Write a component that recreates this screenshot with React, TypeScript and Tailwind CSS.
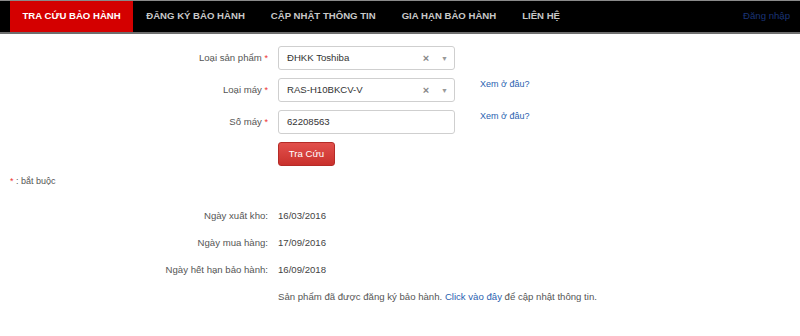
import React from 'react';

const NAV_ITEMS = ['TRA CỨU BẢO HÀNH', 'ĐĂNG KÝ BẢO HÀNH', 'CẬP NHẬT THÔNG TIN', 'GIA HẠN BẢO HÀNH', 'LIÊN HỆ'];

const INFO_ROWS = [
  { label: 'Ngày xuất kho:', value: '16/03/2016' },
  { label: 'Ngày mua hàng:', value: '17/09/2016' },
  { label: 'Ngày hết hạn bảo hành:', value: '16/09/2018' },
];

const SelectBox: React.FC<{ value: string }> = ({ value }) => (
  <div className="w-[177px] h-[24px] border border-[#cfcfcf] rounded-[3px] bg-white flex items-center pl-[8px] pr-[6px] text-[9.6px] text-[#333]">
    <span className="flex-1">{value}</span>
    <span className="text-[11px] text-[#888] font-bold mr-[12px] leading-none">×</span>
    <span className="text-[7px] text-[#999] leading-none">▼</span>
  </div>
);

const Label: React.FC<{ text: string }> = ({ text }) => (
  <div className="w-[268px] text-right text-[9.6px] text-[#555]">
    {text} <span className="text-[#e33] text-[9px]">*</span>
  </div>
);

export default function App() {
  return (
    <div className="w-[800px] h-[336px] bg-white overflow-hidden" style={{ fontFamily: '"Liberation Sans", Arial, sans-serif' }}>
      {/* nav */}
      <div className="h-[34px] bg-black border-t border-b-2 border-t-[#8a8a8a] border-b-[#6e6e6e] flex items-stretch">
        <div className="w-[10px]" />
        {NAV_ITEMS.map((item, i) => (
          <div
            key={item}
            className={`flex items-center text-[9.6px] font-bold ${
              i === 0 ? 'bg-[#d40000] text-white px-[12.5px]' : 'text-[#c8c8c8] px-[13px]'
            }`}
          >
            {item}
          </div>
        ))}
        <div className="flex-1" />
        <div className="flex items-center pr-[10px] text-[9.6px] text-[#1b3577]">Đăng nhập</div>
      </div>

      {/* form */}
      <div className="mt-[12px] flex flex-col gap-[8px]">
        <div className="flex items-center">
          <Label text="Loại sản phẩm" />
          <div className="ml-[10px]"><SelectBox value="ĐHKK Toshiba" /></div>
        </div>
        <div className="flex items-center">
          <Label text="Loại máy" />
          <div className="ml-[10px]"><SelectBox value="RAS-H10BKCV-V" /></div>
          <a className="ml-[25px] self-start leading-[12px] text-[9px] text-[#2a5fb0]">Xem ở đâu?</a>
        </div>
        <div className="flex items-center">
          <Label text="Số máy" />
          <div className="ml-[10px] w-[177px] h-[24px] border border-[#cfcfcf] rounded-[3px] flex items-center pl-[8px] text-[9.6px] text-[#333]">
            62208563
          </div>
          <a className="ml-[25px] self-start leading-[12px] text-[9px] text-[#2a5fb0]">Xem ở đâu?</a>
        </div>
        <div className="flex">
          <div className="w-[278px]" />
          <button className="w-[57px] h-[24px] rounded-[3px] bg-gradient-to-b from-[#e2504c] to-[#c9302c] border border-[#b52b27] text-white text-[9.6px]">
            Tra Cứu
          </button>
        </div>
      </div>

      <div className="mt-[9px] pl-[10px] text-[9px] text-[#555] leading-[12px]">
        <span className="text-[#e33]">*</span> : bắt buộc
      </div>

      {/* info */}
      <div className="mt-[22px] flex flex-col gap-[13px] text-[9.6px] text-[#555]">
        {INFO_ROWS.map((row) => (
          <div key={row.label} className="flex leading-[14px]">
            <div className="w-[268px] text-right">{row.label}</div>
            <div className="ml-[10px] text-[#444]">{row.value}</div>
          </div>
        ))}
        <div className="flex leading-[14px]">
          <div className="w-[278px]" />
          <div>
            Sản phẩm đã được đăng ký bảo hành. <a className="text-[#2a5fb0]">Click vào đây</a> để cập nhật thông tin.
          </div>
        </div>
      </div>
    </div>
  );
}
